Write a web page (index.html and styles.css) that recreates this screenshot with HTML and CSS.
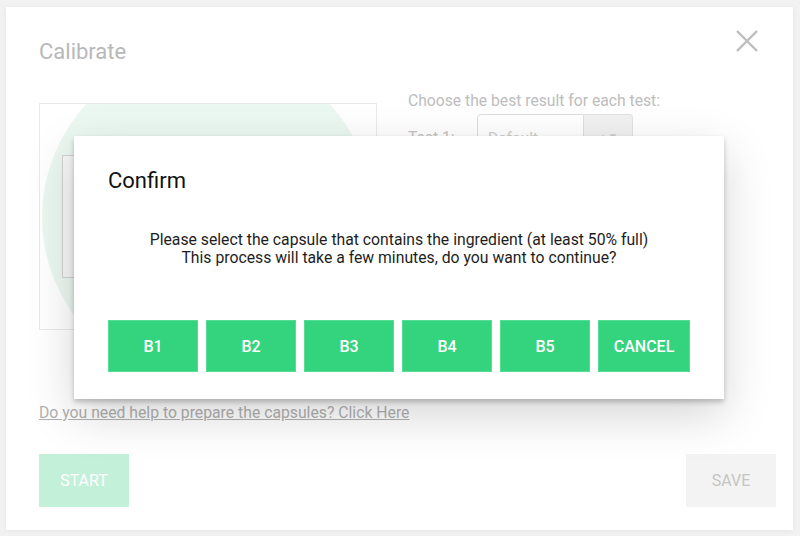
FILE: index.html
```html
<!DOCTYPE html>
<html>
<head>
<meta charset="utf-8">
<link rel="stylesheet" href="styles.css">
</head>
<body>
<div class="panel">
  <div class="header">
    <h1 class="title">Calibrate</h1>
    <svg class="close" width="22" height="22" viewBox="0 0 22 22"><path d="M1 1 L21 21 M21 1 L1 21" stroke="#bdbdbd" stroke-width="2.4" fill="none"/></svg>
  </div>
  <div class="content">
    <div class="preview">
      <div class="circle"></div>
      <div class="frame"></div>
    </div>
    <div class="tests">
      <p class="choose">Choose the best result for each test:</p>
      <div class="test-row">
        <span class="test-label">Test 1:</span>
        <div class="select">Default</div>
        <div class="addon">▲▼</div>
      </div>
    </div>
  </div>
  <a class="help">Do you need help to prepare the capsules? Click Here</a>
  <div class="footer">
    <button class="btn-start">START</button>
    <button class="btn-save">SAVE</button>
  </div>
</div>

<div class="modal">
  <h2 class="modal-title">Confirm</h2>
  <p class="modal-text">Please select the capsule that contains the ingredient (at least 50% full)<br>This process will take a few minutes, do you want to continue?</p>
  <div class="modal-actions">
    <button class="btn-green">B1</button>
    <button class="btn-green">B2</button>
    <button class="btn-green">B3</button>
    <button class="btn-green">B4</button>
    <button class="btn-green">B5</button>
    <button class="btn-green btn-cancel">CANCEL</button>
  </div>
</div>
</body>
</html>
```

FILE: styles.css
```css
* { box-sizing: border-box; }
html, body { margin: 0; padding: 0; }
body {
  width: 800px;
  height: 536px;
  overflow: hidden;
  position: relative;
  background: #f2f2f2;
  font-family: Roboto, "Liberation Sans", sans-serif;
}
.panel {
  margin: 7px 0 0 6px;
  width: 787px;
  height: 523px;
  background: #fff;
  box-shadow: 0 1px 6px rgba(0,0,0,0.06);
}
.header {
  display: flex;
  justify-content: space-between;
  align-items: flex-start;
  padding: 23px 35px 0 33px;
}
.title {
  margin: 9px 0 0 0;
  font-size: 22px;
  line-height: 26px;
  font-weight: 400;
  color: #b8b8b8;
}
.close { display: block; }
.content {
  display: flex;
  align-items: flex-start;
  padding-left: 33px;
  margin-top: 26px;
  gap: 31px;
}
.preview {
  position: relative;
  margin-top: 12px;
  width: 338px;
  height: 227px;
  border: 1px solid #e9e9e9;
  overflow: hidden;
}
.circle {
  position: absolute;
  left: 2px;
  top: -53px;
  width: 332px;
  height: 332px;
  border-radius: 50%;
  background: #ebf8f1;
}
.frame {
  position: absolute;
  left: 22px;
  top: 51px;
  width: 292px;
  height: 123px;
  border: 1px solid #d3d3d3;
  background: #f6f6f6;
}
.tests { width: 300px; }
.choose {
  margin: 0;
  font-size: 15.7px;
  line-height: 20px;
  color: #bdbdbd;
}
.test-row {
  display: flex;
  align-items: center;
  margin-top: 3px;
  height: 46px;
}
.test-label {
  width: 69px;
  font-size: 15.7px;
  color: #c4c4c4;
}
.select {
  width: 107px;
  height: 46px;
  border: 1px solid #dedede;
  border-radius: 4px 0 0 4px;
  padding: 14px 10px;
  font-size: 15.7px;
  color: #cfcfcf;
}
.addon {
  width: 49px;
  height: 46px;
  border: 1px solid #e2e2e2;
  border-left: none;
  border-radius: 0 4px 4px 0;
  background: #f1f1f1;
  color: #cfcfcf;
  font-size: 10px;
  text-align: center;
  padding-top: 16px;
}
.help {
  display: block;
  margin: 74px 0 0 33px;
  font-size: 15.75px;
  line-height: 18px;
  color: #b0b0b0;
  text-decoration: underline;
}
.footer {
  display: flex;
  justify-content: space-between;
  padding: 0 17px 0 33px;
  margin-top: 32px;
}
.footer button {
  width: 90px;
  height: 53px;
  border: none;
  font-family: Roboto, "Liberation Sans", sans-serif;
  font-size: 16px;
  font-weight: 400;
}
.btn-start { background: #c3f0d8; color: #fff; }
.btn-save { background: #f3f3f3; color: #c4c4c4; }

.modal {
  position: absolute;
  left: 74px;
  top: 136px;
  width: 650px;
  height: 263px;
  background: #fff;
  padding: 32px 34px 28px 34px;
  box-shadow: 0 3px 5px rgba(0,0,0,0.22), 0 16px 44px rgba(0,0,0,0.17);
}
.modal-title {
  margin: 0;
  font-size: 22px;
  line-height: 26px;
  font-weight: 400;
  color: #111;
}
.modal-text {
  margin: 37px 0 0 0;
  text-align: center;
  font-size: 15.75px;
  line-height: 18px;
  color: #1e1e1e;
}
.modal-actions {
  display: flex;
  gap: 8px;
  margin-top: 53px;
}
.btn-green {
  width: 90px;
  height: 52px;
  background: #34d47e;
  border: 1px solid #55dd95;
  color: #fff;
  font-family: Roboto, "Liberation Sans", sans-serif;
  font-size: 16px;
  font-weight: 500;
  padding: 0;
}
.btn-cancel { width: 92px; }
```
